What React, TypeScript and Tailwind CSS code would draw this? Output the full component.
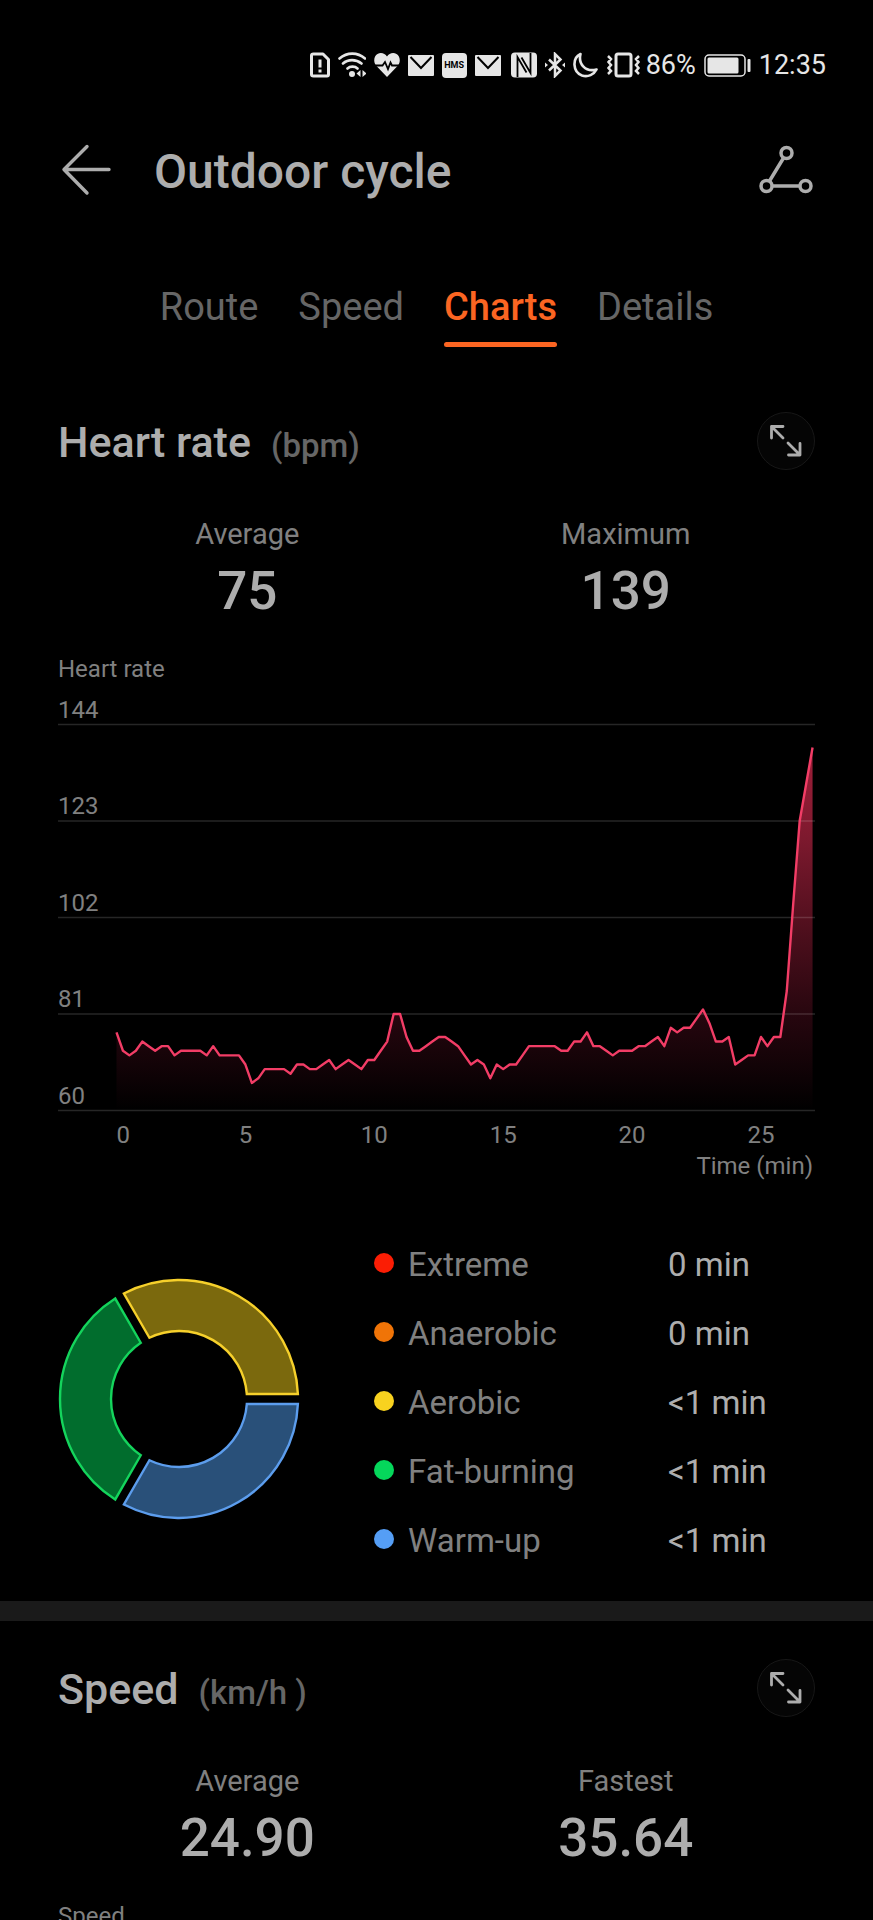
import React from 'react';

// one sample every 15 seconds
const HEART_RATE = [
  77, 73, 72, 73, 75, 74, 73, 74, 74, 72, 73, 73, 73, 73, 72, 74, 72, 72, 72, 72,
  70, 66, 67, 69, 69, 69, 69, 68, 70, 70, 69, 69, 70, 71, 69, 70, 71, 70, 69, 71,
  71, 73, 75, 81, 81, 76, 73, 73, 74, 75, 76, 76, 75, 74, 72, 70, 71, 70, 67, 70,
  69, 70, 70, 72, 74, 74, 74, 74, 74, 73, 73, 75, 75, 77, 74, 74, 73, 72, 73, 73,
  73, 74, 74, 75, 76, 74, 78, 77, 78, 78, 80, 82, 79, 75, 75, 76, 70, 71, 72, 72,
  76, 74, 76, 76, 86, 105, 123, 131, 139,
];

const Y_TICKS = [144, 123, 102, 81, 60];
const X_TICKS = [0, 5, 10, 15, 20, 25];

const TABS = ['Route', 'Speed', 'Charts', 'Details'];

const ZONES = [
  { name: 'Extreme', time: '0 min', dot: 'bg-[#fb1d04]' },
  { name: 'Anaerobic', time: '0 min', dot: 'bg-[#f07407]' },
  { name: 'Aerobic', time: '<1 min', dot: 'bg-[#f8d21f]' },
  { name: 'Fat-burning', time: '<1 min', dot: 'bg-[#05d75b]' },
  { name: 'Warm-up', time: '<1 min', dot: 'bg-[#559ef5]' },
];

const SLICES = [
  { from: 0, to: 120, fill: '#295079', stroke: '#5c9ded' },
  { from: 120, to: 240, fill: '#016d2d', stroke: '#14d45c' },
  { from: 240, to: 360, fill: '#7b690d', stroke: '#f6d02b' },
];

const MailIcon = () => (
  <svg width="26" height="26" viewBox="0 0 26 26">
    <rect y="3" width="26" height="21" rx="1" fill="currentColor" />
    <path d="M2.500 5L13 16L23.500 5" fill="none" stroke="#000" strokeWidth="2" />
  </svg>
);

const StatusBar = () => (
  <div className="flex h-[50px] items-center justify-end gap-2 pr-[47px] text-[27px] text-[#e6e6e6]">
    <svg width="20" height="26" viewBox="0 0 20 26" fill="none" stroke="currentColor" strokeWidth="3">
      <path d="M3.500 2H13L18.500 7.500V22.500Q18.500 24 17 24H3.500Q1.500 24 1.500 22.500V3.500Q1.500 2 3.500 2Z" strokeLinejoin="round" />
      <path d="M10 7.500V15.500M10 17.500V20.500" />
    </svg>
    <svg width="28" height="26" viewBox="0 0 28 26" fill="none" stroke="currentColor" strokeWidth="2.600">
      <path d="M1.500 6.500C9 0 19.500 0 27 6.500M5 11.500C10 7 18 7 23.500 11.500M9.500 16.500C12 14 17 14 19.500 16.500" strokeLinecap="round" />
      <circle cx="14" cy="22" r="3" fill="currentColor" stroke="none" />
      <path d="M22.500 18V25L18.500 21.500ZM24.500 18V25L28.500 21.500Z" fill="currentColor" stroke="none" />
    </svg>
    <svg width="26" height="26" viewBox="0 0 26 26">
      <path d="M13 25L2 13.500C-1 9.500 0 4 3.500 2C7 0 11 1.500 13 4.500C15 1.500 19 0 22.500 2C26 4 27 9.500 24 13.500Z" fill="currentColor" />
      <path d="M1 13.500H8.500L11 10L14 17L16.500 10.500L18 13.500H25" fill="none" stroke="#000" strokeWidth="1.800" />
    </svg>
    <MailIcon />
    <span className="flex h-[25px] w-[25px] items-center justify-center rounded-[4px] bg-[#e6e6e6] text-[9px] font-bold leading-none text-black">
      HMS
    </span>
    <MailIcon />
    <svg width="28" height="26" viewBox="0 0 28 26">
      <rect x="2" y="0.500" width="26" height="25" rx="4" fill="currentColor" />
      <path d="M8.500 25V5L17.500 20.500M21.500 1V21L12.500 5.500" fill="none" stroke="#000" strokeWidth="1.800" />
    </svg>
    <svg width="20" height="26" viewBox="0 0 20 26" fill="none" stroke="currentColor" strokeWidth="2.500">
      <path d="M4 7.500L15.500 18.500L10 24V2L15.500 7.500L4 18.500" />
      <path d="M0 10.500L3 13L0 15.500ZM20 10.500L17 13L20 15.500Z" fill="currentColor" stroke="none" />
    </svg>
    <svg width="25" height="26" viewBox="0 0 25 26" fill="none" stroke="currentColor" strokeWidth="2.600">
      <path d="M7.500 2C-1 6 -.5 20 9 23.500C15 25.500 21 22.500 23.500 17.500C12.500 20.500 5 12 7.500 2Z" strokeLinejoin="round" />
    </svg>
    <div className="flex items-center gap-1">
      <svg width="36" height="26" viewBox="0 0 36 26" fill="none" stroke="currentColor" strokeWidth="3">
        <rect x="10" y="2" width="15" height="22" rx="2" />
        <path d="M2 4L5 7L2.500 10L5 13L2.500 16L5 19L2 22M33 4L30 7L32.500 10L30 13L32.500 16L30 19L33 22" strokeWidth="2.500" />
      </svg>
      <span>86%</span>
    </div>
    <svg width="47" height="24" viewBox="0 0 47 24" fill="none" stroke="currentColor">
      <rect x="1" y="2" width="40" height="21" rx="4" strokeWidth="1.500" />
      <rect x="3.500" y="4.500" width="31" height="16" rx="1.500" fill="currentColor" stroke="none" />
      <rect x="43.500" y="6" width="3" height="13" rx="1" fill="currentColor" stroke="none" />
    </svg>
    <span>12:35</span>
  </div>
);

const HeartRateChart = () => {
  const x = (minutes: number) => 58.5 + minutes * 25.78;
  const y = (bpm: number) => 424.5 - (bpm - 60) * (386 / 84);
  const line = HEART_RATE.map((bpm, i) => `${x(i / 4)},${y(bpm)}`).join(' ');
  const last = x((HEART_RATE.length - 1) / 4);

  return (
    <svg viewBox="0 0 757 500" className="block w-full" role="img" aria-label="Heart rate over time">
      <defs>
        <linearGradient id="heartFill" gradientUnits="userSpaceOnUse" x1="0" y1={y(139)} x2="0" y2={y(60)}>
          <stop offset="0%" stopColor="#a01f3a" />
          <stop offset="25%" stopColor="#7d192e" />
          <stop offset="50%" stopColor="#4f0f1d" />
          <stop offset="75%" stopColor="#25060e" />
          <stop offset="100%" stopColor="#000000" />
        </linearGradient>
      </defs>
      <polygon points={`${x(0)},${y(60)} ${line} ${last},${y(60)}`} fill="url(#heartFill)" />
      {Y_TICKS.map((tick) => (
        <g key={tick}>
          <line x1="0" x2="757" y1={y(tick)} y2={y(tick)} stroke="#ffffff" strokeOpacity="0.15" strokeWidth="1.500" />
          <text x="0" y={y(tick) - 7} fontSize="24" fill="#808080">{tick}</text>
        </g>
      ))}
      <polyline points={line} fill="none" stroke="#f23d66" strokeWidth="2.400" strokeLinejoin="round" />
      {X_TICKS.map((tick) => (
        <text key={tick} x={x(tick)} y="457" fontSize="24" fill="#808080" textAnchor={tick === 0 ? 'start' : 'middle'}>
          {tick}
        </text>
      ))}
      <text x="755" y="488" fontSize="24" fill="#808080" textAnchor="end">Time (min)</text>
    </svg>
  );
};

// ring slice whose straight sides keep a constant distance to the next slice
const slicePath = (from: number, to: number) => {
  const gap = 5;
  const point = (r: number, deg: number, side: number) => {
    const a = (deg * Math.PI) / 180 + side * Math.asin(gap / r);
    return `${121 + r * Math.cos(a)} ${121 + r * Math.sin(a)}`;
  };
  return `M${point(119, from, 1)} A119 119 0 0 1 ${point(119, to, -1)} L${point(68, to, -1)} A68 68 0 0 0 ${point(68, from, 1)} Z`;
};

const ZoneDonut = () => (
  <svg width="242" height="242" viewBox="0 0 242 242" className="mt-12 shrink-0" role="img" aria-label="Heart rate zones">
    {SLICES.map((s) => (
      <path key={s.from} d={slicePath(s.from, s.to)} fill={s.fill} stroke={s.stroke} strokeWidth="2.400" />
    ))}
  </svg>
);

type Metric = { label: string; value: string };

const Section: React.FC<{
  title: string;
  unit: string;
  metrics: Metric[];
  children?: React.ReactNode;
}> = ({ title, unit, metrics, children }) => (
  <section className="px-[58px] pt-[38px]">
    <div className="flex items-end justify-between">
      <h2 className="flex items-baseline gap-5 font-medium">
        <span className="text-[43px] leading-[56px] text-[#adadad]">{title}</span>
        <span className="text-[33px] leading-10 text-[#666666]">{unit}</span>
      </h2>
      <button
        type="button"
        aria-label={`Expand ${title}`}
        className="flex size-[58px] items-center justify-center rounded-full border border-[#171717] bg-[#050505] text-[#adadad]"
      >
        <svg width="34" height="34" viewBox="0 0 34 34" fill="none" stroke="currentColor" strokeWidth="2.800" strokeLinecap="round" strokeLinejoin="round">
          <path d="M2.500 14V2.500H14M2.500 2.500L14 14M19 19L31 31M19.500 31H31V19.500" />
        </svg>
      </button>
    </div>

    <dl className="mt-11 grid grid-cols-2 text-center">
      {metrics.map((m) => (
        <div key={m.label}>
          <dt className="text-[29px] leading-10 text-[#808080]">{m.label}</dt>
          <dd className="text-[53px] font-medium leading-[74px] text-[#adadad]">{m.value}</dd>
        </div>
      ))}
    </dl>

    <h3 className="mt-6 text-2xl leading-[34px] text-[#808080]">{title}</h3>
    {children}
  </section>
);

export default function App() {
  return (
    <div className="h-screen overflow-y-auto bg-black pt-10 font-['Roboto',sans-serif] [scrollbar-width:none]">
      <StatusBar />

      <header className="mt-[42px] flex h-20 items-center pr-[58px] pl-[60px] text-[#adadad]">
        <button type="button" aria-label="Back">
          <svg width="54" height="56" viewBox="0 0 54 56" fill="none" stroke="currentColor" strokeWidth="3.400" strokeLinecap="round" strokeLinejoin="round">
            <path d="M27 2.500L4 25.500L27 49M4 25.500H49" />
          </svg>
        </button>
        <h1 className="ml-10 flex-1 text-5xl font-medium leading-[56px]">Outdoor cycle</h1>
        <button type="button" aria-label="Share track">
          <svg width="56" height="56" viewBox="0 0 56 56" fill="none" stroke="currentColor" strokeWidth="3.500">
            <circle cx="27.500" cy="9" r="5.500" />
            <circle cx="7.500" cy="42" r="5.500" />
            <circle cx="46.500" cy="42" r="5.500" />
            <path d="M24.500 14L10.500 37M13 42H41" />
          </svg>
        </button>
      </header>

      <nav className="mt-16 mb-[27px] flex justify-center gap-10 text-[38px] leading-[62px]">
        {TABS.map((tab) => (
          <button
            key={tab}
            type="button"
            className={tab === 'Charts' ? 'font-medium text-[#fb6522]' : 'text-[#666666]'}
          >
            {tab}
            <span className={tab === 'Charts' ? 'mt-1 block h-[5px] rounded-full bg-[#fb6522]' : 'mt-1 block h-[5px]'} />
          </button>
        ))}
      </nav>

      <main>
        <Section
          title="Heart rate"
          unit="(bpm)"
          metrics={[
            { label: 'Average', value: '75' },
            { label: 'Maximum', value: '139' },
          ]}
        >
          <HeartRateChart />

          {/* Time in zones */}
          <div className="mt-11 flex items-start gap-[74px] pb-[26px]">
            <ZoneDonut />
            <dl className="flex-1 text-[33px] leading-[69px]">
              {ZONES.map((zone) => (
                <div key={zone.name} className="flex items-center">
                  <span className={`mb-1 size-5 rounded-full ${zone.dot}`} />
                  <dt className="ml-3.5 w-[260px] text-[#808080]">{zone.name}</dt>
                  <dd className="text-[#adadad]">{zone.time}</dd>
                </div>
              ))}
            </dl>
          </div>
        </Section>

        <div className="h-5 bg-[#1a1a1a]" />

        <Section
          title="Speed"
          unit="(km/h )"
          metrics={[
            { label: 'Average', value: '24.90' },
            { label: 'Fastest', value: '35.64' },
          ]}
        />
      </main>
    </div>
  );
}
